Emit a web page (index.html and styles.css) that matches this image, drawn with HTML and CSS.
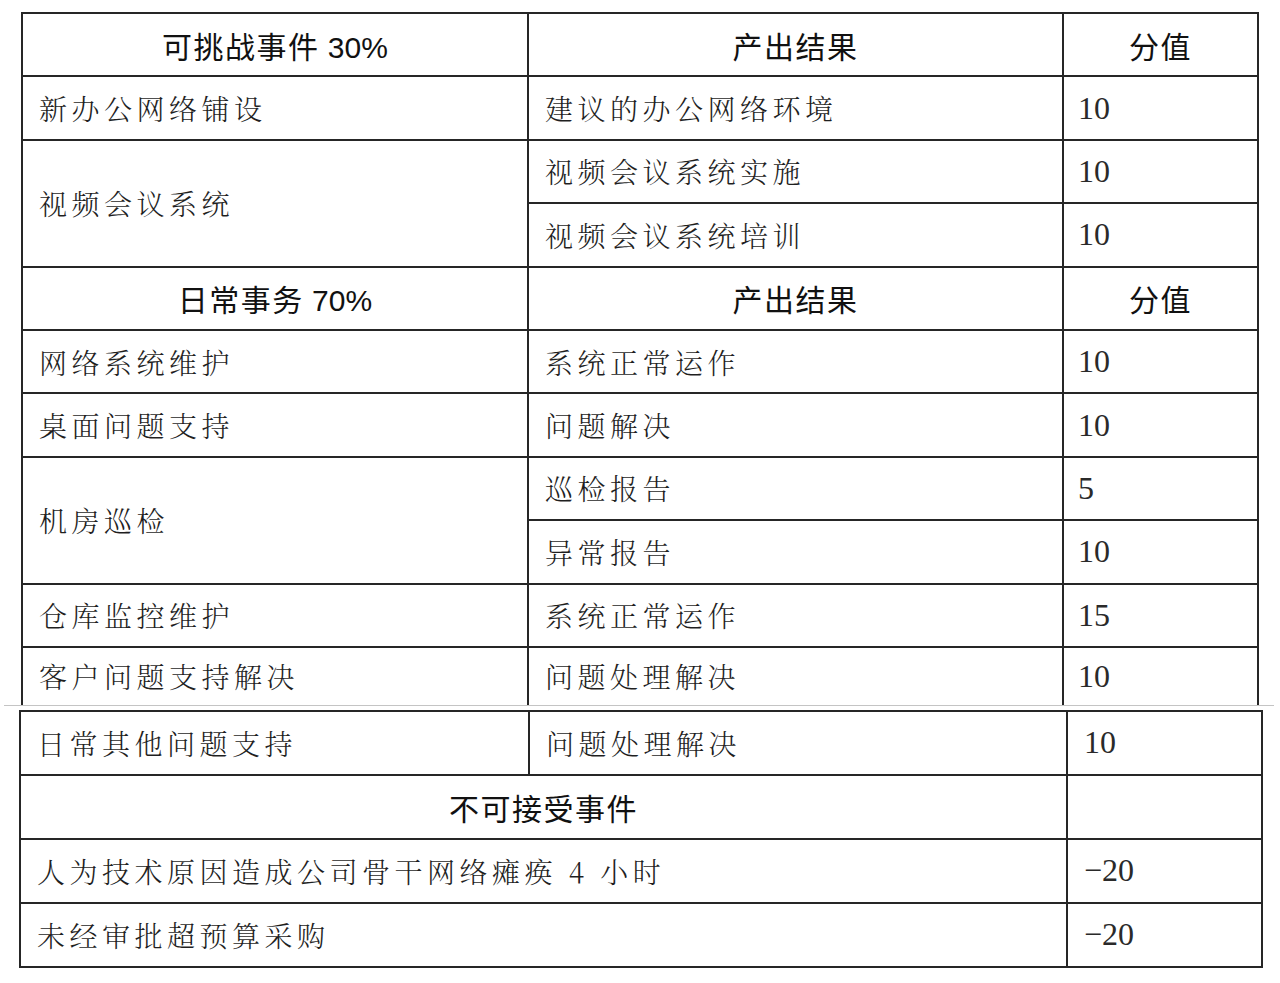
FILE: index.html
```html
<!DOCTYPE html>
<html lang="zh-CN">
<head>
<meta charset="utf-8">
<title>考核表</title>
<link rel="stylesheet" href="styles.css">
</head>
<body>
<div class="page">
  <table class="sheet sheet-top">
    <colgroup><col class="c1"><col class="c2"><col class="c3"></colgroup>
    <tr class="hd"><th>可挑战事件 <span class="pct">30%</span></th><th>产出结果</th><th>分值</th></tr>
    <tr><td>新办公网络铺设</td><td>建议的办公网络环境</td><td class="num">10</td></tr>
    <tr><td rowspan="2">视频会议系统</td><td>视频会议系统实施</td><td class="num">10</td></tr>
    <tr><td>视频会议系统培训</td><td class="num">10</td></tr>
    <tr class="hd"><th>日常事务 <span class="pct">70%</span></th><th>产出结果</th><th>分值</th></tr>
    <tr><td>网络系统维护</td><td>系统正常运作</td><td class="num">10</td></tr>
    <tr><td>桌面问题支持</td><td>问题解决</td><td class="num">10</td></tr>
    <tr><td rowspan="2">机房巡检</td><td>巡检报告</td><td class="num">5</td></tr>
    <tr><td>异常报告</td><td class="num">10</td></tr>
    <tr><td>仓库监控维护</td><td>系统正常运作</td><td class="num">15</td></tr>
    <tr class="cut"><td>客户问题支持解决</td><td>问题处理解决</td><td class="num">10</td></tr>
  </table>
  <div class="seam"></div>
  <table class="sheet sheet-bottom">
    <colgroup><col class="d1"><col class="d2"><col class="d3"></colgroup>
    <tr><td>日常其他问题支持</td><td>问题处理解决</td><td class="num">10</td></tr>
    <tr class="hd"><th colspan="2">不可接受事件</th><th></th></tr>
    <tr><td colspan="2">人为技术原因造成公司骨干网络瘫痪 4 小时</td><td class="num">−20</td></tr>
    <tr><td colspan="2">未经审批超预算采购</td><td class="num">−20</td></tr>
  </table>
</div>
</body>
</html>
```
FILE: styles.css
```css
html, body {
  margin: 0;
  background: #ffffff;
}

.page {
  padding-top: 12px;
}

.sheet {
  border-collapse: collapse;
  table-layout: fixed;
}

.sheet td,
.sheet th {
  border: 2px solid #262626;
  padding: 0 0 0 16px;
  vertical-align: middle;
  text-align: left;
  font-family: "Noto Serif CJK SC", "Noto Sans CJK SC", serif;
  font-weight: 300;
  font-size: 28px;
  letter-spacing: 4.5px;
  color: #1f1f1f;
  white-space: nowrap;
}

.sheet tr {
  height: 63.4px;
}

.sheet .hd th {
  padding: 0;
  text-align: center;
  font-family: "Noto Sans CJK SC", sans-serif;
  font-weight: 400;
  font-size: 30px;
  letter-spacing: 1.5px;
  color: #111111;
}

.sheet .hd th .pct {
  font-family: "Liberation Sans", Arial, sans-serif;
  letter-spacing: 0;
}

.sheet td.num {
  padding-left: 14px;
  font-family: "Liberation Serif", "Times New Roman", serif;
  font-size: 32px;
  font-weight: 400;
  letter-spacing: 0;
  color: #2a2a2a;
}

.sheet-top {
  margin-left: 21px;
  width: 1236px;
}

.sheet-top .c1 { width: 506px; }
.sheet-top .c2 { width: 535px; }
.sheet-top .c3 { width: 195px; }

.sheet-top tr.cut {
  height: 58px;
}

.sheet-top tr.cut td {
  border-bottom: none;
}

.seam {
  height: 1px;
  margin: 0 6px 0 4px;
  background: #c4c4c4;
}

.sheet-bottom {
  margin-top: 4px;
  margin-left: 19px;
  width: 1242px;
}

.sheet-bottom .d1 { width: 509px; }
.sheet-bottom .d2 { width: 538px; }
.sheet-bottom .d3 { width: 195px; }

.sheet-bottom tr {
  height: 64px;
}

.sheet-bottom td.num {
  padding-left: 16px;
}
```
